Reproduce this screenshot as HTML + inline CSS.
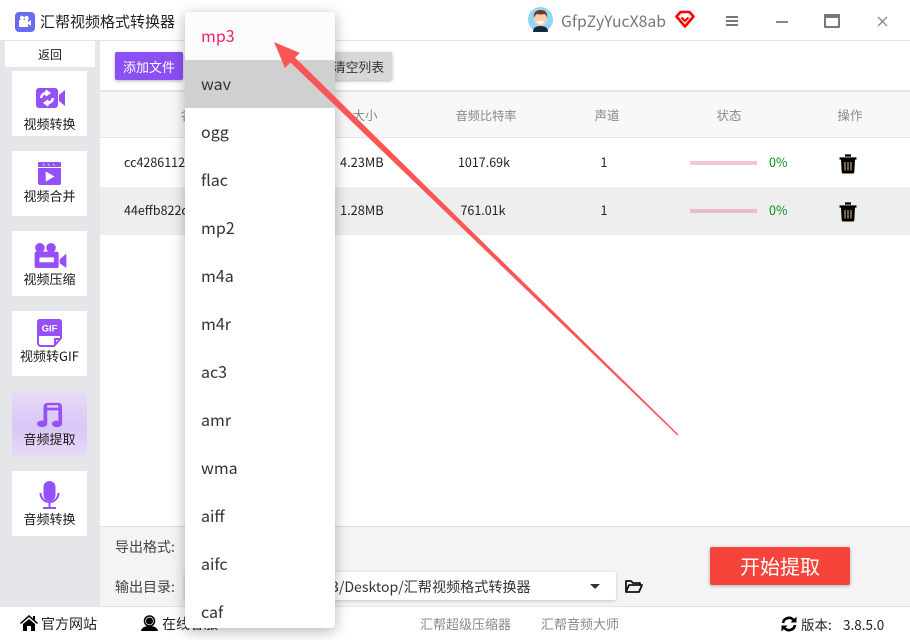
<!DOCTYPE html>
<html lang="zh"><head><meta charset="utf-8"><style>
*{box-sizing:border-box;margin:0;padding:0}
html,body{width:910px;height:640px;overflow:hidden;background:#fff}
body{position:relative;font-family:"Noto Sans CJK SC","Liberation Sans",sans-serif;color:#222;font-size:13px}
.a{position:absolute}
.t{position:absolute;white-space:nowrap;line-height:20px}
.c{transform:translateX(-50%)}
.card{position:absolute;left:12px;width:75px;height:65px;background:#fff}
.card span{position:absolute;left:0;right:0;bottom:2px;text-align:center;font-size:13px;line-height:20px;white-space:nowrap;color:#1a1a1a}
.card svg{position:absolute}
.hd{color:#888;font-size:12.5px}
.dd{position:absolute;left:185px;top:12px;width:150px;height:616px;background:#fff;border-radius:4px;box-shadow:0 3px 14px rgba(0,0,0,.3)}
.dd div{height:48px;line-height:46px;padding-left:16px;font-size:16px;color:#333}
</style></head><body>
<!-- title -->
<div class="a" style="left:0;top:40px;width:910px;height:1px;background:#e2e2e2"></div>
<svg class="a" style="left:15px;top:12px" width="20" height="20" viewBox="0 0 20 20"><rect width="20" height="20" rx="4" fill="#6a6cf0"/><path d="M4 8h9v7H4zM13 10l3-2v6l-3-2z" fill="#fff"/><circle cx="7" cy="6" r="2.2" fill="#fff"/><circle cx="11.5" cy="6" r="2.2" fill="#fff"/></svg>
<div class="t" style="left:40px;top:12px;font-size:15px;color:#222">汇帮视频格式转换器</div>
<svg class="a" style="left:528px;top:7px" width="25" height="25" viewBox="0 0 25 25"><circle cx="12.5" cy="12.5" r="12.5" fill="#8fd6f7"/><path d="M5 25q0-6 7.500-6t7.500 6z" fill="#16293f"/><ellipse cx="12.500" cy="12" rx="6.500" ry="7" fill="#f6cfae"/><path d="M6 11q-1-8 6.500-8t6.500 8q-1-4-3-4-3 1-7 0-2 1-3 4z" fill="#6b3a20"/><path d="M9 14h7q-1 3-3.500 3T9 14z" fill="#fff"/></svg>
<div class="t" style="left:561px;top:11px;font-size:15.8px;color:#777">GfpZyYucX8ab</div>
<svg class="a" style="left:675px;top:10px" width="20" height="19" viewBox="0 0 20 19"><path d="M5.500 2h9l4 4.500L10 16.500 1.500 6.500z" fill="none" stroke="#f00" stroke-width="2.600" stroke-linejoin="round"/><path d="M6.500 7.500l3.500 3.500 3.500-3.500" fill="none" stroke="#f00" stroke-width="2.200"/></svg>
<div class="a" style="left:726px;top:16px;width:12px;height:2px;background:#777;box-shadow:0 4px 0 #777,0 8px 0 #777"></div>
<div class="a" style="left:776px;top:21px;width:12px;height:2px;background:#888"></div>
<div class="a" style="left:824px;top:14px;width:16px;height:14px;border:2px solid #777;border-top-width:4px;border-radius:1px"></div>
<svg class="a" style="left:876px;top:15px" width="13" height="13" viewBox="0 0 13 13"><path d="M2 2l9 9M11 2l-9 9" stroke="#888" stroke-width="1.300"/></svg>
<!-- sidebar -->
<div class="a" style="left:0;top:41px;width:100px;height:565px;background:#e4e6ea"></div>
<div class="a" style="left:5px;top:41px;width:90px;height:26px;background:#fff;text-align:center;line-height:27px;font-size:12px;color:#222">返回</div>
<div class="card" style="top:71px"><svg style="left:24px;top:17px" width="29" height="20" viewBox="0 0 29 20"><path d="M3 0h16a3 3 0 0 1 3 3v14a3 3 0 0 1-3 3H3a3 3 0 0 1-3-3V3a3 3 0 0 1 3-3zM23 7l6-5v16l-6-5z" fill="#9650fa"/><path d="M5 10q1-5 6-5M9.500 2.500L13 5l-3.500 2.500M17 10q-1 5-6 5M12.500 17.500L9 15l3.500-2.500" fill="none" stroke="#fff" stroke-width="2.400"/></svg><span>视频转换</span></div>
<div class="card" style="top:151px"><svg style="left:26px;top:11px" width="23" height="23" viewBox="0 0 23 23"><path d="M1 0h21a1 1 0 0 1 1 1v4H0V1a1 1 0 0 1 1-1zM0 6h23v15a2 2 0 0 1-2 2H2a2 2 0 0 1-2-2z" fill="#9650fa"/><path d="M8 10l8 4.500-8 4.500zM5 1.500l1.500 2.500M10 1.500l1.500 2.500M15 1.500l1.500 2.500" fill="#fff" stroke="#fff" stroke-width=".6"/></svg><span style="bottom:10px">视频合并</span></div>
<div class="card" style="top:231px"><svg style="left:22px;top:12px" width="33" height="25" viewBox="0 0 33 26"><circle cx="5.500" cy="5" r="5" fill="#9650fa"/><circle cx="17" cy="5" r="5" fill="#9650fa"/><path d="M2 9h21a2 2 0 0 1 2 2v13a2 2 0 0 1-2 2H2a2 2 0 0 1-2-2V11a2 2 0 0 1 2-2zM26 17l7-6v15l-7-5z" fill="#9650fa"/><rect x="5" y="15" width="15" height="5" fill="#fff"/></svg><span style="bottom:7px">视频压缩</span></div>
<div class="card" style="top:311px"><svg style="left:25px;top:8px" width="25" height="28" viewBox="0 0 25 28"><path d="M1 3a2 2 0 0 1 2-2h19a2 2 0 0 1 2 2v16l-7 8H4a3 3 0 0 1-3-3z" fill="#fff" stroke="#9650fa" stroke-width="2"/><path d="M3 0h19a3 3 0 0 1 3 3v14H0V3a3 3 0 0 1 3-3z" fill="#9650fa"/><path d="M24 20h-6v6" fill="none" stroke="#9650fa" stroke-width="2"/><text x="12.500" y="12.500" font-size="9.500" font-weight="700" text-anchor="middle" fill="#fff" font-family="Liberation Sans">GIF</text></svg><span style="left:-8px;right:-8px;bottom:10px">视频转GIF</span></div>
<div class="card" style="top:391px;background:linear-gradient(#e8dcf6,#d9c6f7 55%,#e6daf6)"><svg style="left:24px;top:11px" width="28" height="26" viewBox="0 0 28 28"><path d="M7 5a4 4 0 0 1 4-4h12a4 4 0 0 1 4 4v18h-4V9H11v14H7zM11 3.500h12v2.500H11z" fill="#9650fa" fill-rule="evenodd"/><ellipse cx="5.500" cy="23.500" rx="5.500" ry="3.500" fill="#9650fa"/><ellipse cx="21.500" cy="23.500" rx="5.500" ry="3.500" fill="#9650fa"/></svg><span style="bottom:7px">音频提取</span></div>
<div class="card" style="top:471px"><svg style="left:27px;top:10px" width="21" height="28" viewBox="0 0 21 28"><rect x="4.500" y="0" width="12" height="20" rx="6" fill="#9650fa"/><path d="M1.500 12a9 9 0 0 0 18 0M10.500 21v5M4 27h13" fill="none" stroke="#9650fa" stroke-width="2"/></svg><span style="bottom:7px">音频转换</span></div>
<!-- toolbar -->
<div class="a" style="left:115px;top:52px;width:68px;height:28px;background:#8a4ff5;border-radius:2px;box-shadow:0 1px 3px rgba(0,0,0,.3);color:#fff;text-align:center;line-height:29px;font-size:13px">添加文件</div>
<div class="a" style="left:320px;top:52px;width:72px;height:28px;background:#d8d8d8;border-radius:2px;box-shadow:0 1px 3px rgba(0,0,0,.3);color:#333;line-height:29px;font-size:12.800px;text-align:right;padding-right:8px">清空列表</div>
<div class="a" style="left:100px;top:90px;width:810px;height:2px;background:#e4e4e4"></div>
<!-- table -->
<div class="a" style="left:100px;top:92px;width:810px;height:45px;background:#f8f8f8"></div>
<div class="a" style="left:100px;top:137px;width:810px;height:1px;background:#e4e4e4"></div>
<div class="a" style="left:100px;top:187px;width:810px;height:48px;background:#eee"></div>
<div class="t hd c" style="left:193px;top:105px">名称</div>
<div class="t hd c" style="left:365px;top:105px">大小</div>
<div class="t hd c" style="left:486px;top:105px;font-size:12.200px">音频比特率</div>
<div class="t hd c" style="left:607px;top:105px">声道</div>
<div class="t hd c" style="left:729px;top:105px">状态</div>
<div class="t hd c" style="left:850px;top:105px">操作</div>
<div class="t" style="left:124px;top:152px;font-size:12.500px">cc4286112</div>
<div class="t" style="left:124px;top:200px;font-size:12.500px">44effb822c</div>
<div class="t" style="left:340px;top:152px;font-size:12.800px">4.23MB</div>
<div class="t" style="left:340px;top:200px;font-size:12.800px">1.28MB</div>
<div class="t c" style="left:484px;top:152px;font-size:12.500px">1017.69k</div>
<div class="t" style="left:448px;top:200px;font-size:12.500px;width:70px;text-align:center">761.01k</div>
<div class="t c" style="left:604px;top:152px;font-size:12.500px">1</div>
<div class="t c" style="left:604px;top:200px;font-size:12.500px">1</div>
<div class="a" style="left:690px;top:161px;width:67px;height:4px;background:#f7c6d6"></div>
<div class="a" style="left:690px;top:209px;width:67px;height:4px;background:#ecbccc"></div>
<div class="t" style="left:769px;top:152px;font-size:12.500px;color:#0a8a1a">0%</div>
<div class="t" style="left:769px;top:200px;font-size:12.500px;color:#0a8a1a">0%</div>
<svg class="a" style="left:839px;top:154px" width="18" height="20" viewBox="0 0 18 20"><path d="M6 1.500h6M.5 4.500h17" stroke="#000" stroke-width="2.200" fill="none"/><path d="M2 5h14l-.7 13a1.500 1.500 0 0 1-1.500 1.500H4.200a1.500 1.500 0 0 1-1.500-1.500z" fill="#000"/><path d="M6 8v8.500M9 8v8.500M12 8v8.500" stroke="#e8c890" stroke-width="1"/></svg>
<svg class="a" style="left:839px;top:202px" width="18" height="20" viewBox="0 0 18 20"><path d="M6 1.500h6M.5 4.500h17" stroke="#000" stroke-width="2.200" fill="none"/><path d="M2 5h14l-.7 13a1.500 1.500 0 0 1-1.500 1.500H4.200a1.500 1.500 0 0 1-1.500-1.500z" fill="#000"/><path d="M6 8v8.500M9 8v8.500M12 8v8.500" stroke="#e8c890" stroke-width="1"/></svg>
<!-- bottom panel -->
<div class="a" style="left:100px;top:526px;width:810px;height:80px;background:#f4f4f4;border-top:1px solid #e2e2e2"></div>
<div class="t" style="left:115px;top:537px;font-size:14px;color:#444">导出格式:</div>
<div class="t" style="left:115px;top:577px;font-size:14px;color:#444">输出目录:</div>
<div class="a" style="left:185px;top:572px;width:431px;height:28px;background:#fff;border-radius:2px;box-shadow:0 1px 3px rgba(0,0,0,.2)"></div>
<div class="t" style="left:331px;top:577px;font-size:14.100px;color:#333">3/Desktop/汇帮视频格式转换器</div>
<div class="a" style="left:590px;top:584px;width:0;height:0;border:5px solid transparent;border-top:5px solid #333;border-bottom:0"></div>
<svg class="a" style="left:625px;top:579px" width="18" height="15" viewBox="0 0 18 15"><path d="M1 13V2h5l2 2h7v2M1 13l3-7h13l-3 7z" fill="none" stroke="#111" stroke-width="1.800" stroke-linejoin="round"/></svg>
<div class="a" style="left:710px;top:547px;width:140px;height:38px;background:#f7443a;border-radius:2px;box-shadow:0 1px 3px rgba(0,0,0,.3);color:#fff;text-align:center;line-height:38px;font-size:20px">开始提取</div>
<!-- footer -->
<div class="a" style="left:0;top:606px;width:910px;height:34px;background:#fff;border-top:1px solid #e2e2e2"></div>
<svg class="a" style="left:20px;top:615px" width="18" height="16" viewBox="0 0 18 16"><path d="M9 0L0 8l1 1 8-7 8 7 1-1-3-2.700V1h-2v2.500z" fill="#000"/><path d="M3 9l6-5 6 5v7h-4v-5H7v5H3z" fill="#000"/></svg>
<div class="t" style="left:41px;top:614px;font-size:14px">官方网站</div>
<svg class="a" style="left:141px;top:615px" width="17" height="17" viewBox="0 0 17 17"><circle cx="8.500" cy="6" r="5" fill="none" stroke="#000" stroke-width="1.500"/><circle cx="8.500" cy="6" r="3.500" fill="#000"/><path d="M0 16q1-5 8.500-5t8.500 5z" fill="#000"/></svg>
<div class="t" style="left:162px;top:614px;font-size:14px">在线客服</div>
<div class="t" style="left:420px;top:614px;font-size:13px;color:#888">汇帮超级压缩器</div>
<div class="t" style="left:541px;top:614px;font-size:13px;color:#888">汇帮音频大师</div>
<svg class="a" style="left:781px;top:616px" width="16" height="16" viewBox="0 0 16 16"><path d="M2 7a6 6 0 0 1 10.500-3M14 9a6 6 0 0 1-10.500 3" fill="none" stroke="#000" stroke-width="2.600"/><path d="M15.500 .5v6h-6zM.5 15.500v-6h6z" fill="#000"/></svg>
<div class="t" style="left:801px;top:614px;font-size:13.500px">版本:</div>
<div class="t" style="left:843px;top:614px;font-size:13.500px">3.8.5.0</div>
<!-- dropdown -->
<div class="dd"><div style="background:#fcfcfc;color:#e9256b">mp3</div><div style="background:#d0d0d0">wav</div><div>ogg</div><div>flac</div><div>mp2</div><div>m4a</div><div>m4r</div><div>ac3</div><div>amr</div><div>wma</div><div>aiff</div><div>aifc</div><div>caf</div></div>
<!-- arrow -->
<svg class="a" style="left:0;top:0;pointer-events:none" width="910" height="640" viewBox="0 0 910 640"><path d="M274 42L300 53 295 57.500 678.500 434.500 677.500 435.500 290.500 62.500 285 68z" fill="#fb5555"/></svg>
</body></html>
